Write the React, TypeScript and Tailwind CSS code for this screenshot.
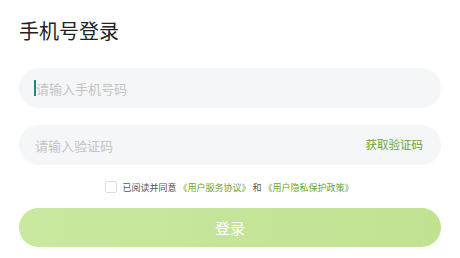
import React from "react";

export default function App() {
  const font = { fontFamily: '"Noto Sans CJK SC", "Noto Sans", sans-serif' };
  return (
    <div className="w-[460px] h-[258px] bg-white overflow-hidden" style={font}>
      <div className="px-[19px] pt-[17px]">
        <h1 className="text-[20px] leading-[28px] text-[#222] font-normal">手机号登录</h1>
        <div className="mt-[23px] h-[40px] rounded-full bg-[#f5f6f8] flex items-center pl-[15px] pr-[18px]">
          <span className="w-[2px] h-[16px] bg-[#1f8a78]" />
          <span className="text-[13px] text-[#c4c4c4] leading-none">请输入手机号码</span>
        </div>
        <div className="mt-[17px] h-[40px] rounded-full bg-[#f5f6f8] flex items-center justify-between pl-[16px] pr-[18px]">
          <span className="text-[13px] text-[#c4c4c4] leading-none">请输入验证码</span>
          <span className="text-[11.5px] text-[#6ba42e] leading-none">获取验证码</span>
        </div>
        <div className="mt-[16px] flex items-center justify-center gap-[5px] pr-[1px]">
          <span className="w-[12px] h-[12px] rounded-[2px] border border-[#dcdcdc] bg-white" />
          <span className="text-[9px] text-[#555] leading-none whitespace-nowrap">
            已阅读并同意 <span className="text-[#6ba42e]">《用户服务协议》</span> 和 <span className="text-[#6ba42e]">《用户隐私保护政策》</span>
          </span>
        </div>
        <div className="mt-[15px] h-[39px] rounded-full bg-gradient-to-r from-[#c9e9a1] to-[#c0e291] flex items-center justify-center">
          <span className="text-[15px] text-white leading-none">登录</span>
        </div>
      </div>
    </div>
  );
}
